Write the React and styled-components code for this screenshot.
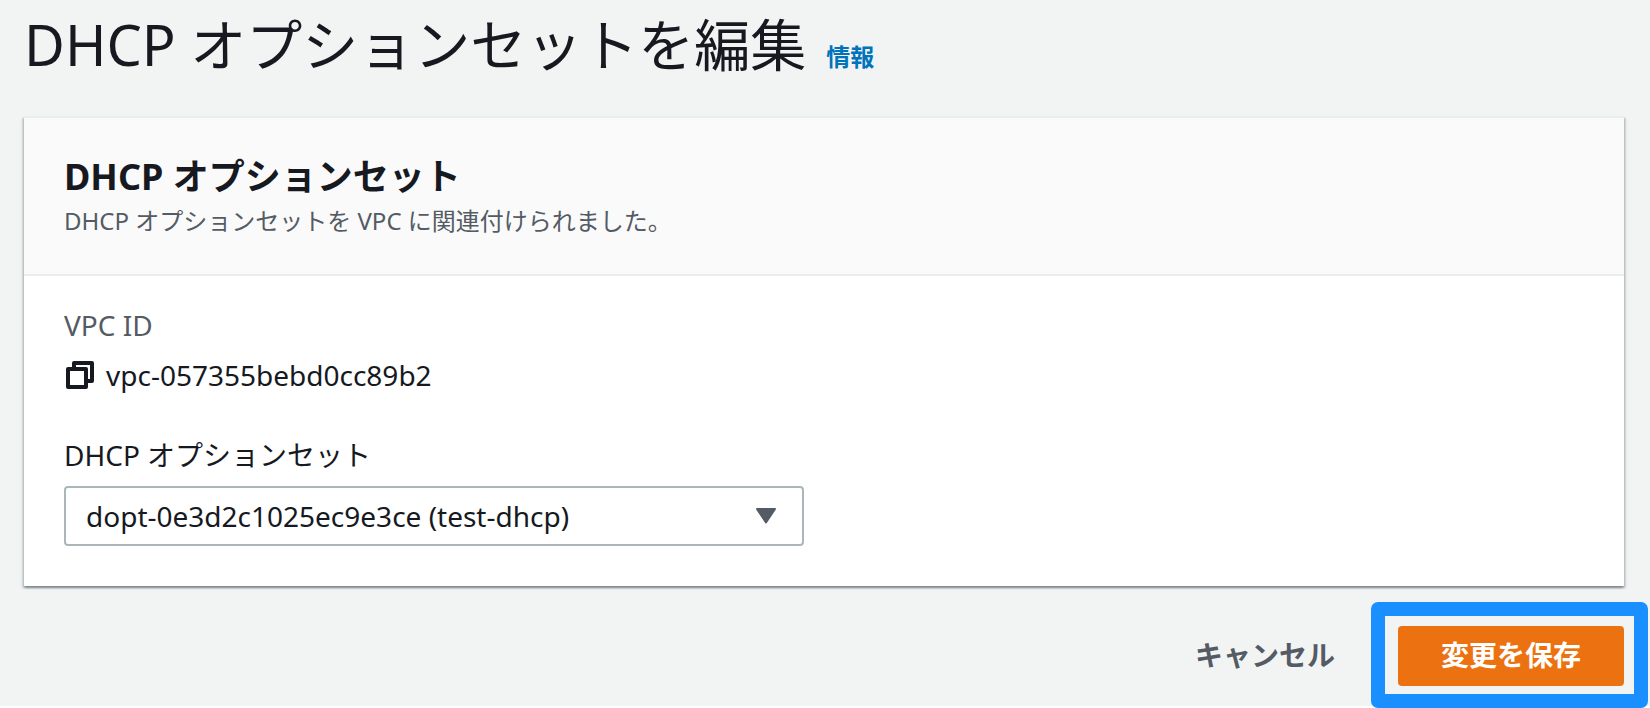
import React, { useState } from 'react';
import styled, { createGlobalStyle } from 'styled-components';

const GlobalStyle = createGlobalStyle`
* {
  box-sizing: border-box;
}

body {
  margin: 0;
  min-height: 100vh;
  background: #ffffff;
  color: #16191f;
  font-family: 'Noto Sans', 'Noto Sans CJK JP', sans-serif;
  font-size: 28px;
  line-height: 44px;
}
`

const Page = styled.main`
background: #f2f4f4;
padding: 8px 26px 20px 24px;
`

const TitleRow = styled.header`
display: flex;
align-items: baseline;
gap: 20px;
margin-bottom: 36px;
`

const Title = styled.h1`
margin: 0;
font-size: 56px;
font-weight: 400;
line-height: 72px;
`

const InfoLink = styled.a`
color: #0073bb;
font-size: 24px;
font-weight: 700;
text-decoration: none;
`

const Panel = styled.section`
background: #ffffff;
border-top: 2px solid #eaeded;
box-shadow:
  0 2px 2px rgba(0, 28, 36, 0.3),
  2px 2px 2px rgba(0, 28, 36, 0.15),
  -2px 2px 2px rgba(0, 28, 36, 0.15);
`

const PanelHeader = styled.div`
background: #fafafa;
border-bottom: 2px solid #eaeded;
padding: 37px 40px 31px;
`

const PanelTitle = styled.h2`
margin: 0;
font-size: 36px;
font-weight: 700;
`

const Description = styled.p`
margin: 0;
color: #545b64;
font-size: 24px;
`

const PanelBody = styled.div`
display: flex;
flex-direction: column;
gap: 36px;
padding: 27px 40px 40px;
`

const Field = styled.div`
display: flex;
flex-direction: column;
gap: ${props => props.$gap};
`

const FieldName = styled.div`
color: #545b64;
`

const CopyRow = styled.div`
display: flex;
align-items: center;
gap: 10px;
`

const CopyButton = styled.button`
display: flex;
padding: 0;
border: none;
background: none;
color: inherit;
cursor: pointer;
`

const SelectBox = styled.div`
display: grid;
align-items: center;
width: 50%;
max-width: 740px;

> * {
  grid-area: 1 / 1;
}

svg {
  justify-self: end;
  margin-right: 28px;
  pointer-events: none;
}
`

const Select = styled.select`
appearance: none;
width: 100%;
height: 60px;
padding: 0 60px 0 20px;
border: 2px solid #aab7b8;
border-radius: 4px;
background: #ffffff;
color: inherit;
font: inherit;
`

const Actions = styled.footer`
display: flex;
justify-content: flex-end;
gap: 20px;
margin-top: 40px;
`

const Button = styled.button`
height: 60px;
padding: 0 43px 2px;
border: none;
border-radius: 4px;
background: ${props => props.$primary ? '#ec7211' : 'transparent'};
color: ${props => props.$primary ? '#ffffff' : '#545b64'};
font: inherit;
font-weight: 700;
cursor: pointer;
`

/* blue frame drawn round the save button */
const Highlight = styled.div`
position: relative;

&::after {
  content: '';
  position: absolute;
  inset: -24px -24px -22px -27px;
  border: 14px solid #1a8fff;
  border-radius: 7px;
  pointer-events: none;
}
`

function CopyIcon() {
  return (
    <svg width="32" height="32" viewBox="0 0 32 32" fill="none" stroke="currentColor" strokeWidth="4" strokeLinejoin="round">
      <path d="M10 8V4h18v18h-4" />
      <path d="M4 10h18v18H4z" />
    </svg>
  )
}

function ArrowIcon() {
  return (
    <svg width="20" height="16" viewBox="0 0 20 16" fill="#545b64" stroke="#545b64" strokeWidth="2" strokeLinejoin="round">
      <path d="M1 1h18l-9 13.500z" />
    </svg>
  )
}

function App() {
  const vpcId = 'vpc-057355bebd0cc89b2'
  const [optionSet, setOptionSet] = useState('dopt-0e3d2c1025ec9e3ce')

  return (
    <>
      <GlobalStyle />
      <Page>
        <TitleRow>
          <Title>DHCP オプションセットを編集</Title>
          <InfoLink href="#info">情報</InfoLink>
        </TitleRow>

        <Panel>
          <PanelHeader>
            <PanelTitle>DHCP オプションセット</PanelTitle>
            <Description>DHCP オプションセットを VPC に関連付けられました。</Description>
          </PanelHeader>
          <PanelBody>
            <Field $gap="6px">
              <FieldName>VPC ID</FieldName>
              <CopyRow>
                <CopyButton type="button" aria-label="コピー" onClick={() => navigator.clipboard.writeText(vpcId)}>
                  <CopyIcon />
                </CopyButton>
                <span>{vpcId}</span>
              </CopyRow>
            </Field>
            <Field $gap="9px">
              <label htmlFor="option-set">DHCP オプションセット</label>
              <SelectBox>
                <Select id="option-set" value={optionSet} onChange={e => setOptionSet(e.target.value)}>
                  <option value="dopt-0e3d2c1025ec9e3ce">dopt-0e3d2c1025ec9e3ce (test-dhcp)</option>
                </Select>
                <ArrowIcon />
              </SelectBox>
            </Field>
          </PanelBody>
        </Panel>

        <Actions>
          <Button type="button">キャンセル</Button>
          <Highlight>
            <Button type="submit" $primary>変更を保存</Button>
          </Highlight>
        </Actions>
      </Page>
    </>
  );
}

export default App;
